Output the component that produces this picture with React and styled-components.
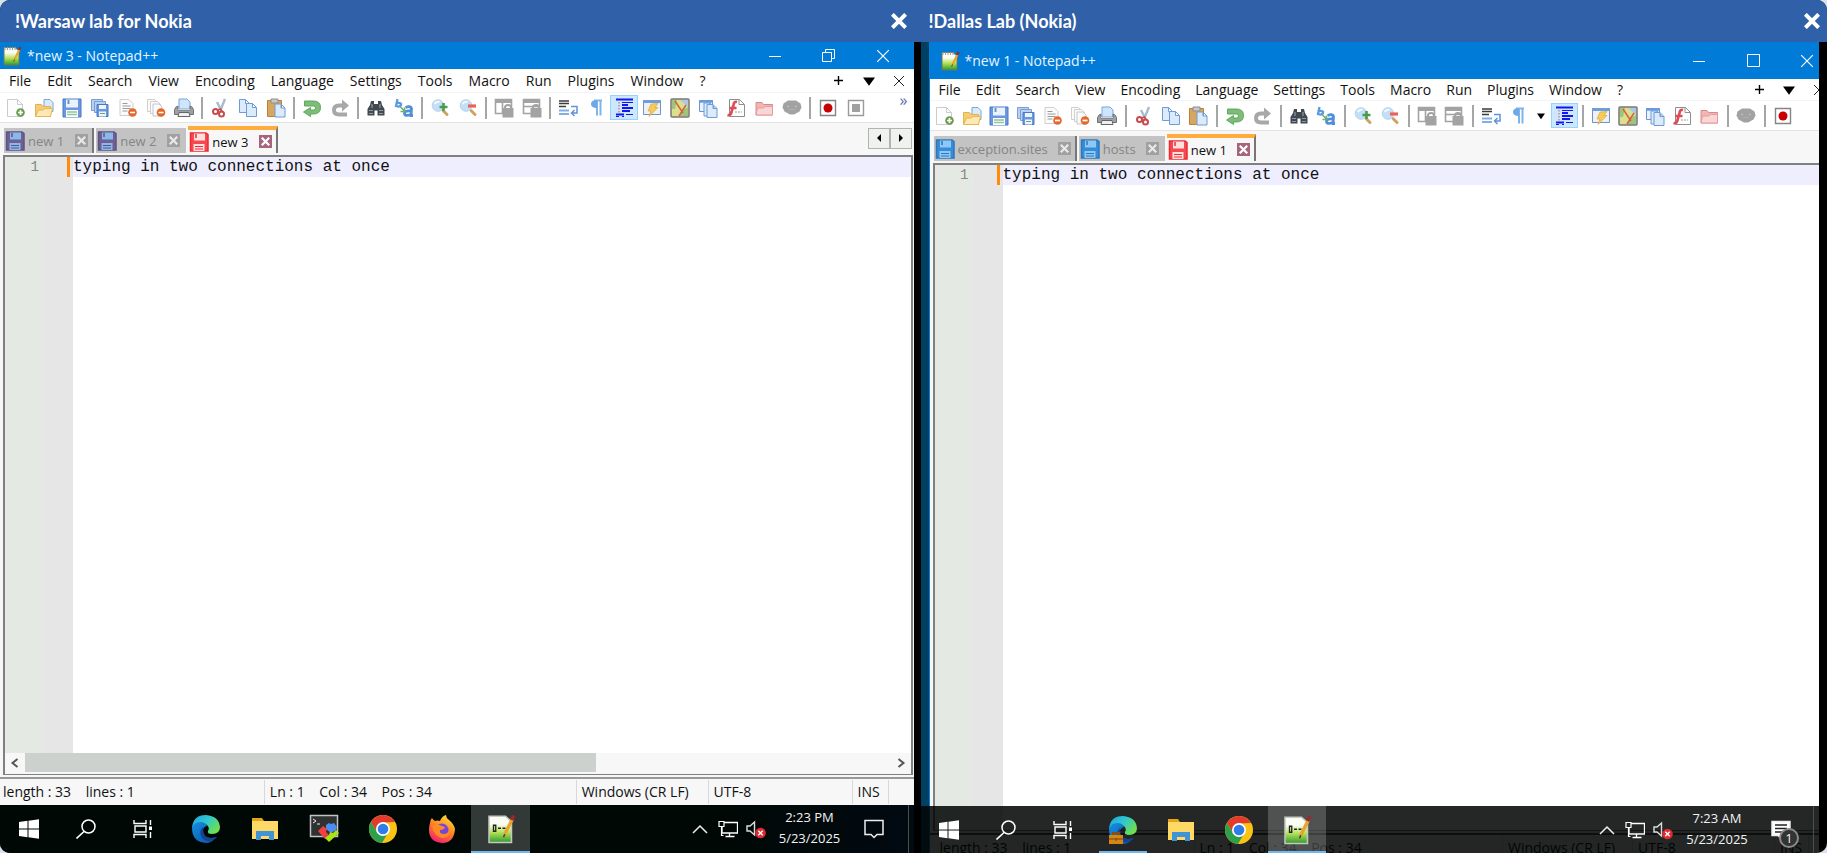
import React, { useState } from 'react';
import styled, { createGlobalStyle, css } from 'styled-components';

const UI_FONT = "'Open Sans', 'Noto Sans', sans-serif";

const GlobalStyle = createGlobalStyle`
	* {
		box-sizing: border-box;
	}
	body {
		margin: 0;
		background: #d9e2ec;
		font-family: ${UI_FONT};
		font-size: 13px;
	}
	button {
		border: none;
		padding: 0;
		background: none;
		font: inherit;
		color: inherit;
		cursor: pointer;
	}
	svg {
		display: block;
		flex: none;
	}
`;

const Screen = styled.main`
	display: grid;
	grid-template-columns: minmax(0, 1fr) calc(50% - 7px);
	height: 100vh;
	min-height: 480px;
	border-radius: 10px;
	overflow: hidden;
	background: #000;
`;

const Pane = styled.section`
	display: flex;
	flex-direction: column;
	min-width: 0;
	min-height: 0;
`;

const PaneHeader = styled.header`
	display: flex;
	align-items: center;
	justify-content: space-between;
	flex: none;
	height: 42px;
	padding-left: ${(p) => (p.$second ? '8px' : '15px')};
	padding-right: ${(p) => (p.$second ? '7px' : '14px')};
	background: #3060a8;
	color: #fff;
`;

const PaneTitle = styled.h1`
	margin: 0;
	font-family: Lato, sans-serif;
	font-size: 18px;
	line-height: 24px;
	font-weight: 700;
`;

const Desktop = styled.div`
	position: relative;
	display: flex;
	flex-direction: column;
	flex: 1;
	min-height: 0;
	overflow: hidden;
	margin-right: ${(p) => (p.$second ? '8px' : '7px')};
	padding-left: ${(p) => (p.$second ? '8px' : '0')};
	background: #004062;
`;

const AppWindow = styled.div`
	display: flex;
	flex-direction: column;
	flex: 1;
	min-height: 0;
	background: #f7f7f7;
	color: #111;
	${(p) =>
		p.$second &&
		css`
			margin-right: -15px;
			margin-bottom: -8px;
			border-left: 1px solid #0a7bd6;
		`}
`;

const TitleBar = styled.div`
	display: flex;
	align-items: center;
	flex: none;
	height: ${(p) => (p.$second ? '37px' : '27px')};
	padding-left: ${(p) => (p.$second ? '10px' : '2px')};
	padding-right: ${(p) => (p.$second ? '0' : '4px')};
	gap: 5px;
	background: #007bd8;
	color: #e8f4ff;
`;

const WindowTitle = styled.span`
	flex: 1;
	font-size: 14px;
	white-space: nowrap;
`;

const CaptionButtons = styled.div`
	display: flex;
	align-self: stretch;
`;

const CaptionButton = styled.button`
	display: grid;
	place-items: center;
	width: 54px;
`;

const MenuBar = styled.nav`
	display: flex;
	align-items: center;
	flex: none;
	height: ${(p) => (p.$second ? '22px' : '24px')};
	padding-left: 9px;
	gap: ${(p) => (p.$second ? '15px' : '16px')};
	background: #fff;
	border-bottom: 1px solid #f4f4f4;
	font-size: 14px;
	line-height: 20px;
	white-space: nowrap;
`;

const MenuExtras = styled.div`
	display: flex;
	margin-left: auto;
`;

const ExtraButton = styled.button`
	display: grid;
	place-items: center;
	width: 30px;
	height: 20px;
`;

const ToolBar = styled.div`
	display: flex;
	align-items: center;
	flex: none;
	height: 30px;
	padding: 0 4px 0 2px;
	background: #fff;
	border-bottom: 1px solid #e4e4e4;
`;

const ToolButton = styled.button`
	display: grid;
	place-items: center;
	flex: none;
	width: ${(p) => (p.$second ? '27px' : '28px')};
	height: 25px;
	${(p) =>
		p.$active &&
		css`
			background: #cce8ff;
			border: 1px solid #99d1ff;
		`}
`;

const CaretButton = styled(ToolButton)`
	width: 19px;
`;

const Separator = styled.span`
	flex: none;
	width: 2px;
	height: 22px;
	margin: 0 ${(p) => (p.$second ? '4px' : '3px')};
	background: #a6a6a6;
`;

const Overflow = styled.button`
	align-self: flex-start;
	margin-left: auto;
	margin-right: 2px;
	font-size: 16px;
	line-height: 14px;
	color: #5b6ba8;
`;

const TabStrip = styled.div`
	display: flex;
	align-items: flex-end;
	flex: none;
	height: 32px;
	gap: 2px;
	padding: 0 2px 2px 4px;
`;

const Tab = styled.div`
	display: flex;
	align-items: center;
	height: ${(p) => (p.$active ? '27px' : '25px')};
	padding: 0 4px 0 1px;
	gap: ${(p) => (p.$second ? '10px' : '11px')};
	background: ${(p) => (p.$active ? '#f7f7f7' : '#c3c3c3')};
	color: ${(p) => (p.$active ? '#111' : '#858585')};
	border-top: ${(p) => (p.$active ? '4px solid #ffab3d' : 'none')};
	border-right: 2px solid ${(p) => (p.$edge ? '#777' : '#c3c3c3')};
`;

const TabButton = styled.button`
	display: flex;
	align-items: center;
	gap: 3px;
	line-height: 20px;
`;

const TabClose = styled.button`
	display: grid;
	place-items: center;
	width: 13px;
	height: 13px;
	background: ${(p) => (p.$active ? '#a8647c' : '#a0a0a0')};
`;

const TabArrows = styled.div`
	display: flex;
	align-self: center;
	margin-left: auto;
`;

const ArrowButton = styled.button`
	display: grid;
	place-items: center;
	width: 22px;
	height: 21px;
	background: #f0f2f0;
	border: 1px solid #b0b3b0;
`;

const EditorFrame = styled.div`
	display: flex;
	flex-direction: column;
	flex: 1;
	min-height: 0;
	margin: ${(p) => (p.$second ? '0 0 2px 3px' : '0 1px 2px 3px')};
	border: 2px solid #808080;
	border-bottom-width: 1px;
`;

const EditorBody = styled.div`
	display: flex;
	flex: 1;
	min-height: 0;
	background: #fff;
`;

const LineNumbers = styled.div`
	flex: none;
	width: 38px;
	padding-right: 4px;
	background: #e4e9e4;
	color: #858585;
	font-family: 'Liberation Mono', monospace;
	font-size: 14px;
	line-height: 20px;
	text-align: right;
`;

const FoldMargin = styled.div`
	display: flex;
	justify-content: flex-end;
	flex: none;
	width: 30px;
	padding-right: 3px;
	background: #e6e6e6;
`;

const ChangeMark = styled.span`
	width: 3px;
	height: 20px;
	background: #ff8a0c;
`;

const Code = styled.textarea`
	flex: 1;
	min-width: 0;
	resize: none;
	border: none;
	outline: none;
	padding: 0;
	overflow: hidden;
	background: linear-gradient(#efeeff, #efeeff) 0 0 / 100% 20px no-repeat #fff;
	color: #111;
	font-family: 'Liberation Mono', monospace;
	font-size: 16px;
	line-height: 20px;
`;

const ScrollRow = styled.div`
	display: flex;
	flex: none;
	height: 21px;
	padding-bottom: 2px;
	background: #f7f7f7;
`;

const ScrollArrow = styled.button`
	display: grid;
	place-items: center;
	width: 20px;
	height: 19px;
`;

const ScrollTrack = styled.div`
	flex: 1;
	display: flex;
`;

const ScrollThumb = styled.div`
	width: 66%;
	background: #cdd1cd;
`;

const StatusBar = styled.footer`
	display: flex;
	align-items: center;
	flex: none;
	height: 28px;
	border-top: 2px solid ${(p) => (p.$second ? '#555' : '#999')};
	font-size: 14px;
	white-space: pre;
`;

const StatusCell = styled.span`
	flex: ${(p) => p.$flex};
	min-width: 0;
	padding-left: ${(p) => (p.$first ? (p.$second ? '10px' : '3px') : '5px')};
	border-right: 1px solid #d8d8d8;
	line-height: 24px;
`;

const StatusTail = styled.span`
	width: 25px;
`;

const TaskBar = styled.div`
	display: flex;
	align-items: stretch;
	flex: none;
	height: 48px;
	background: linear-gradient(90deg, #000806 80%, #020a12);
	color: #f2f2f2;
	${(p) =>
		p.$second &&
		css`
			position: absolute;
			left: 0;
			right: 0;
			bottom: 0;
			height: 47px;
			background: rgba(0, 4, 2, 0.86);
		`}
`;

const TaskButton = styled.button`
	display: grid;
	place-items: center;
	width: ${(p) => (p.$system ? '57px' : p.$second ? '58px' : '59px')};
	padding-top: 2px;
	border-bottom: 2px solid ${(p) => (p.$active ? '#6fb7ee' : 'transparent')};
	background: ${(p) => (p.$active ? 'rgba(255, 255, 255, 0.2)' : 'none')};
`;

const RunningMark = styled(TaskButton)`
	background: linear-gradient(#6fb7ee, #6fb7ee) center bottom / 48px 2px no-repeat;
	border-bottom: none;
	padding-bottom: 2px;
`;

const AppButtons = styled.div`
	display: flex;
	margin-left: ${(p) => (p.$second ? '2px' : '5px')};
`;

const Tray = styled.div`
	display: flex;
	align-items: center;
	margin-left: auto;
	margin-right: 5px;
	border-right: 1px solid #4a4f4d;
`;

const TrayButton = styled.button`
	display: grid;
	place-items: center;
	width: 28px;
	height: 40px;
`;

const Clock = styled.time`
	display: grid;
	justify-items: center;
	width: 80px;
	font-size: 13px;
	line-height: 21px;
	margin-top: -2px;
`;

const NoticeButton = styled.button`
	position: relative;
	display: grid;
	place-items: center;
	width: 48px;
	height: 40px;
	margin-right: ${(p) => (p.$second ? '8px' : '10px')};
`;

const NoticeCount = styled.span`
	position: absolute;
	right: 6px;
	bottom: 2px;
	width: 20px;
	height: 20px;
	border: 2px solid #8a8a8a;
	border-radius: 50%;
	background: #333;
	font-size: 13px;
	line-height: 16px;
	text-align: center;
`;

const Svg = ({ size = 20, box = 20, children }) => (
	<svg width={size} height={size} viewBox={`0 0 ${box} ${box}`} fill='none' aria-hidden='true'>
		{children}
	</svg>
);

const sheet = (x, y, fill = '#dcebfc', stroke = '#6f9bd6') => (
	<path
		d={`M${x} ${y}h6l4 4v9h-10z M${x + 6} ${y}v4h4`}
		fill={fill}
		stroke={stroke}
		strokeLinejoin='round'
	/>
);

const badge = (x, y, color, plus) => (
	<>
		<circle cx={x} cy={y} r='4.3' fill={color} />
		<path d={`M${x - 2.5} ${y}h5${plus ? `M${x} ${y - 2.5}v5` : ''}`} stroke='#fff' strokeWidth='1.7' />
	</>
);

const lens = (plus) => (
	<>
		<path d='M13 12.500l4 4' stroke='#cfa264' strokeWidth='3' strokeLinecap='round' />
		<circle cx='8' cy='7.500' r='5.800' fill='#c3dff5' stroke='#b4d2ea' />
		<path d='M4.500 6q2-3 5-2' stroke='#f2f9ff' strokeWidth='2' />
		{plus ? (
			<path d='M9.500 9h8M13.500 5v8' stroke='#4a9a50' strokeWidth='2.600' />
		) : (
			<path d='M10 8h8' stroke='#f0605a' strokeWidth='3.200' />
		)}
	</>
);

const lockedView = (vertical) => (
	<>
		<path d='M1.500 1.500h16v14h-16z' fill='#fff' stroke='#a3a3a3' strokeWidth='1.600' />
		<path d='M1 3h17' stroke='#a3a3a3' strokeWidth='4' />
		<path d={vertical ? 'M8.500 4v11' : 'M2 8.500h15'} stroke='#a3a3a3' strokeWidth='1.600' />
		<path d='M8.500 10h11v9.500h-11z' fill='#a3a3a3' />
		<path d='M11 11v-1.500q0-2.500 3-2.500t3 2.500v1.500' stroke='#a3a3a3' strokeWidth='2' />
	</>
);

const disk = (fill, stroke, label) => (
	<>
		<path d='M1.500 1h15.500l2 1.500v16.500h-17.500z' fill={fill} stroke={stroke} strokeWidth='1.500' />
		<path d='M5 1.500h11v7h-11z' fill={label} />
		<path d='M7 2v4' stroke={stroke} strokeWidth='1.500' />
		<path d='M4.500 12h11v7h-11z' fill={label} />
		<path d='M6 14.500h8M6 17h8' stroke={stroke} />
	</>
);

const toolIcons = {
	New: (
		<>
			<path d='M1.500 1.500h10l5 5v12h-15z' fill='#fdfdfd' stroke='#c9cdd0' />
			<path d='M11.500 1.500v5h5' stroke='#c9cdd0' />
			{badge(14.5, 14.5, '#6a9d50', true)}
		</>
	),
	Open: (
		<>
			<path d='M10 1.500h6l3 3v9h-9z' fill='#dcebfc' stroke='#7ba6da' />
			<path d='M1.500 6.500h6l2 2h7v10h-15z' fill='#f6cd77' stroke='#e6b04c' />
			<path d='M4.500 12h5l1.500-1.500h7.500l-2 8h-15z' fill='#fde9b5' stroke='#eab54e' />
		</>
	),
	Save: (
		<>
			<path d='M1 1h18v18h-18z' fill='#6a97de' stroke='#4a78c4' />
			<path d='M4 1.500h12v8h-12z' fill='#e9f2fd' />
			<path d='M6.500 2v4' stroke='#6c93c9' strokeWidth='2' />
			<path d='M4 12h12v7h-12z' fill='#fff' />
			<path d='M5 14h10M5 16.500h10' stroke='#8fc59a' strokeWidth='1.500' />
		</>
	),
	'Save All': (
		<>
			<path d='M1.500 1.500h11v11h-11z' fill='#b9d0f1' stroke='#7a9fd8' />
			<path d='M4.500 3.500h11v11h-11z' fill='#b9d0f1' stroke='#7a9fd8' />
			<path d='M7 6.500h11v12h-11z' fill='#6a97de' stroke='#4a78c4' />
			<path d='M9 7h7v4h-7zM9 13.500h7v5h-7z' fill='#eef5fd' />
			<path d='M10 15.500h5' stroke='#6aa57a' />
		</>
	),
	Close: (
		<>
			<path d='M2 1.500h9l4 4v12h-13z' fill='#fbfbfb' stroke='#cfcfcf' />
			<path d='M4.500 5.500h5M4.500 8h8M4.500 10.500h8M4.500 13h5' stroke='#9b9b9b' />
			{badge(14.5, 14.5, '#e4682b')}
		</>
	),
	'Close All': (
		<>
			<path d='M1.500 1.500h7l3 3v9h-10z' fill='#fbfbfb' stroke='#cfcfcf' />
			<path d='M4.500 3.500h7l3 3v9h-10z' fill='#fbfbfb' stroke='#cfcfcf' />
			<path d='M7 6h6l3 3v9h-9z' fill='#fbfbfb' stroke='#c6c6c6' />
			{badge(15, 14.5, '#e4682b')}
		</>
	),
	Print: (
		<>
			<path d='M5 1h8l3 3v7h-11z' fill='#cfe5fc' stroke='#77a6dc' />
			<path d='M2 9l2-1v4h12v-4l2 1 1.500 2.500v5h-19v-5z' fill='#9da1a4' stroke='#6f7274' />
			<path d='M4 11.500h12' stroke='#d4d4d4' />
			<path d='M5 14.500h10l1 4h-12z' fill='#eef0f2' stroke='#666' />
		</>
	),
	Cut: (
		<>
			<path d='M7 4l4 8M15 1l-4.500 11' stroke='#a9bccd' strokeWidth='2.400' />
			<circle cx='5.500' cy='13.500' r='2.500' stroke='#c94b4b' strokeWidth='2' />
			<circle cx='11.500' cy='16' r='2.500' stroke='#c94b4b' strokeWidth='2' />
			<path d='M7.500 12l3-1 1.500 2.500' stroke='#c94b4b' strokeWidth='1.800' />
		</>
	),
	Copy: (
		<>
			{sheet(1.5, 1.5)}
			{sheet(8.5, 5.5)}
		</>
	),
	Paste: (
		<>
			<path d='M1.500 2.500h14v16h-14z' fill='#d9a662' stroke='#b98038' />
			<path d='M5 1h7v4h-7z' fill='#c9c9c9' stroke='#8d8d8d' />
			{sheet(9, 6)}
		</>
	),
	Undo: (
		<path
			d='M2.500 3h9q7 0 7 6.500t-7 6.500h-3v2.500l-7-4.500 7-4.500v2.500h3q2 0 2-2t-2-2h-9z'
			fill='#7dbd78'
			stroke='#56a354'
			strokeWidth='.9'
		/>
	),
	Redo: (
		<path d='M17 18.500h-8q-7 0-7-6.500t7-6.500h3v-4l7 6-7 6v-4h-3q-3 0-3 2.500t3 2.500h8z' fill='#a8a8a8' />
	),
	Find: (
		<>
			<path d='M5 3h3v3h4v-3h3l1 4 2.500 4v6.500h-7v-5h-3v5h-7v-6.500l2.500-4z' fill='#414951' />
			<path d='M6 6v4M14 6v4M3 12.500h4M13 12.500h4M3 15.500h4M13 15.500h4' stroke='#8f9aa4' strokeWidth='1.200' />
		</>
	),
	Replace: (
		<>
			<path d='M3.500 1l-1.500 7q4 1.500 5-1t-4-2' stroke='#5a9be0' strokeWidth='2.300' />
			<path
				d='M11.500 9.500q5-2 6 1l-.5 7h2M17 13q-6-.500-6.500 2 0 4 6 1.500'
				stroke='#4f90d8'
				strokeWidth='2.800'
			/>
			<path d='M6.500 9l4 4M10.500 9.500v4h-4' stroke='#6cb06c' strokeWidth='1.600' />
		</>
	),
	'Zoom In': lens(true),
	'Zoom Out': lens(false),
	'Synchronize Vertical Scrolling': lockedView(true),
	'Synchronize Horizontal Scrolling': lockedView(false),
	'Word Wrap': (
		<>
			<path d='M1 3h10M1 5.500h10M1 8.500h7' stroke='#3b3b3b' strokeWidth='1.500' />
			<path d='M1 12.500h10M1 16h10' stroke='#7fb0ea' strokeWidth='2' />
			<path d='M13 8.500h6v6.500h-5M16.500 12l-3 3 3 3' stroke='#5f93d8' strokeWidth='1.500' />
		</>
	),
	'Show All Characters': (
		<>
			<path d='M8 2.500h8M11 3v14.500M14.500 3v14.500' stroke='#7fb6ea' strokeWidth='2' />
			<path d='M11 2q-6 0-6 4t6 4z' fill='#6ea8e6' />
		</>
	),
	'Show Indent Guide': (
		<>
			<path
				d='M2 1.500h17M8 7h6M8 10h11M8 13h8M2 16.500h8'
				stroke='#1616f0'
				strokeWidth='2'
			/>
			<path d='M8 4.500h11M2 18.500h3M8 18.500h2M12 16.500h7' stroke='#1616f0' />
			<path d='M5 4v11' stroke='#e24b5c' strokeDasharray='1.500 1.500' />
		</>
	),
	'User Defined Language': (
		<>
			<path d='M1.500 2.500h17v14h-17z' fill='#eef2f6' stroke='#6f93c6' />
			<path d='M1 3.500h18' stroke='#6f9edb' strokeWidth='3' />
			<path d='M9 6l7-.500-3 4h3l-9 9 2-5.500h-3z' fill='#f5cc5a' stroke='#dfa53c' strokeWidth='.7' />
		</>
	),
	'Document Map': (
		<>
			<rect x='1' y='1' width='18' height='18' rx='1' fill='#dcdf8e' stroke='#777' strokeWidth='1.500' />
			<path d='M2 2h5l-2 9h-3zM13 12l5-3v9h-9z' fill='#9dc580' />
			<path d='M10 2h8v7z' fill='#a9c9e6' />
			<path d='M5 3l8 12M16 7l-7 11' stroke='#d9603c' strokeWidth='1.500' />
		</>
	),
	'Document List': (
		<>
			<path d='M1.500 2.500h13v11h-13z' fill='#eaf3fd' stroke='#6c95cf' />
			<path d='M1 3.500h14' stroke='#6a9be0' strokeWidth='2.500' />
			{sheet(6, 5)}
			{sheet(9, 6.5)}
		</>
	),
	'Function List': (
		<>
			<path d='M3.500 1.500h10l5 5v12h-15z' fill='#fff' stroke='#8e8e8e' />
			<path d='M13 1.500v5h5' stroke='#8e8e8e' />
			<path d='M11 4q-3-1-3.500 3l-2 7q-.500 4-4 3M3.500 10h7' stroke='#df4b54' strokeWidth='2.700' />
			<path d='M9 14h7' stroke='#999' strokeDasharray='2 1' />
		</>
	),
	'Folder as Workspace': (
		<>
			<path d='M2 4.500h6l1.500 2h9v10.500h-16.500z' fill='#f3b4b4' stroke='#db8a8a' />
			<path d='M2 17l1.500-7h6l2-1.500h7v8.500z' fill='#f8d6d6' stroke='#e59b9b' />
		</>
	),
	Monitoring: (
		<>
			<path d='M6 2.500h8l4.500 3 1 4-2 4-5.500 3h-4l-5.500-3-2-4 1-4z' fill='#a2a2a2' />
			<circle cx='6' cy='8.500' r='.8' fill='#ccc' />
			<circle cx='14' cy='8.500' r='.8' fill='#ccc' />
			<path d='M7 11.500h6' stroke='#bbb' strokeWidth='.6' />
		</>
	),
	'Start Recording': (
		<>
			<path d='M2.500 2.500h15v15h-15z' fill='#fff' stroke='#858585' strokeWidth='1.400' />
			<circle cx='10' cy='10' r='4.500' fill='#c90000' />
		</>
	),
	'Stop Recording': (
		<>
			<path d='M2.500 2.500h15v15h-15z' fill='#fff' stroke='#9a9a9a' strokeWidth='1.400' />
			<path d='M6 6h8v8h-8z' fill='#a0a0a0' />
		</>
	),
};

const NotepadIcon = ({ size = 20, large }) => (
	<Svg size={size}>
		<defs>
			<linearGradient id='padGreen' x1='0' y1='0' x2='0' y2='1'>
				<stop offset='.3' stopColor='#fbfdf4' />
				<stop offset='.6' stopColor='#b9e45c' />
				<stop offset='1' stopColor='#2f9a2a' />
			</linearGradient>
		</defs>
		<path d='M2 1.500h11l4 3.500v14h-15z' fill='url(#padGreen)' stroke={large ? '#c4c8c2' : '#6a7a58'} />
		{large ? (
			<path d='M5 7v5M5 7.500h1.500v4h-1.500M8 9.500h2M11 9.500h2' stroke='#222' strokeWidth='.9' />
		) : (
			<path d='M3 1v3M5.500 1v3M8 1v3M10.500 1v3M13 1v3' stroke='#9a9a9a' />
		)}
		<path d='M17.500 3.500l-5 10' stroke='#e7a52c' strokeWidth='2.300' />
		<path d='M17 4l1.500-3' stroke='#9b2730' strokeWidth='2.400' />
		<path d='M12.500 13.500l-.8 2' stroke='#533' />
	</Svg>
);

const WindowsIcon = () => (
	<Svg>
		<path
			d='M0 3l8.500-1.200v7.700h-8.500zM9.500 1.700l10.500-1.500v9.300h-10.500zM0 10.500h8.500v7.700l-8.500-1.200zM9.500 10.500h10.500v9.300l-10.500-1.500z'
			fill='#fff'
		/>
	</Svg>
);

const SearchIcon = () => (
	<Svg>
		<circle cx='12.500' cy='7.500' r='6.500' stroke='#fff' strokeWidth='1.500' />
		<path d='M8 12.500l-7.500 7' stroke='#fff' strokeWidth='1.600' />
	</Svg>
);

const TaskViewIcon = () => (
	<Svg>
		<path
			d='M1 1v3.500h12v-3.500M1 19v-3.500h12v3.500M2 7h11v6h-11zM17.500 1v5M17.500 13v6'
			stroke='#fff'
			strokeWidth='1.400'
		/>
		<path d='M16 7.500h3v3.500h-3z' fill='#fff' />
	</Svg>
);

const EdgeIcon = ({ work }) => (
	<Svg size={30} box={30}>
		<defs>
			<linearGradient id='edgeTop' x1='0' y1='0' x2='1' y2='.6'>
				<stop offset='0' stopColor='#1ea1dd' />
				<stop offset='.5' stopColor='#2fc6d3' />
				<stop offset='1' stopColor='#6ee04d' />
			</linearGradient>
			<linearGradient id='edgeLow' x1='0' y1='0' x2='1' y2='1'>
				<stop offset='0' stopColor='#1590e4' />
				<stop offset='1' stopColor='#0b4fa3' />
			</linearGradient>
		</defs>
		<path d='M1 14Q2 1 15 1q13 1 14 12 0 7-8 7-5 0-4-3 2-3-1-6-7-5-15 3z' fill='url(#edgeTop)' />
		<path d='M1 14q2-6 8-6 6 0 7 4-5 1-4 7 3 7 13 4-4 6-10 6Q1 28 1 14z' fill='url(#edgeLow)' />
		<path d='M12 13q-5 5-1 11 5 5 11 2 4-2 4-3-10 3-13-3-1-4-1-7z' fill='#15438f' />
		{work && (
			<>
				<path d='M1 20h14v9h-14z' fill='#d78616' />
				<path d='M5 20v-2h6v2' stroke='#8c4d0d' strokeWidth='2' />
				<path d='M1 24h14M8 23v3' stroke='#7a430d' />
			</>
		)}
	</Svg>
);

const ExplorerIcon = () => (
	<Svg size={28} box={28}>
		<path d='M1 3h10l2 3h14v18h-26z' fill='#e5a514' />
		<path d='M1 6h26v18h-26z' fill='#ffd966' />
		<path d='M5 25v-9h18v9h-5v-4h-8v4z' fill='#3f93d6' />
	</Svg>
);

const TerminalIcon = () => (
	<Svg size={30} box={30}>
		<path d='M1.500 1.500h27v21h-27z' fill='#2f3231' stroke='#c0c4c6' strokeWidth='1.500' />
		<path d='M4 5l3 2-3 2M8 10h3' stroke='#eee' />
		<path d='M17 11l3-2 2 1 3-1 3 4-1 3-5 3-5-4z' fill='#4b8df0' />
		<path d='M9 17l5-5 4 3-1 3 4 4-5 3z' fill='#ee4140' />
		<path d='M16 24l4-3 1-3 3 1 3-3 3 3-10 9z' fill='#a8e316' />
	</Svg>
);

const ChromeIcon = () => (
	<Svg size={30} box={30}>
		<circle cx='15' cy='15' r='14' fill='#fbc414' />
		<path d='M2.900 8A14 14 0 0 1 27.100 8L15 8.500 9 18z' fill='#e23b2e' />
		<path d='M2.900 8A14 14 0 0 0 14 29l6.500-11-11.500 0z' fill='#2da04b' />
		<circle cx='15' cy='15' r='7' fill='#fff' />
		<circle cx='15' cy='15' r='5.300' fill='#2f7de9' />
	</Svg>
);

const FirefoxIcon = () => (
	<Svg size={30} box={30}>
		<defs>
			<linearGradient id='foxFire' x1='.8' y1='0' x2='.3' y2='1'>
				<stop offset='0' stopColor='#ffe33c' />
				<stop offset='.5' stopColor='#ff8321' />
				<stop offset='1' stopColor='#f31d71' />
			</linearGradient>
		</defs>
		<path
			d='M3 9q0-3 2-5 1 2 3 3 3-1 5 0 2-5 6-6 0 3 3 5 5 4 6 9-1 14-13 14Q2 28 2 16q0-4 1-7z'
			fill='url(#foxFire)'
		/>
		<circle cx='15' cy='16' r='6.500' fill='#7846d4' />
		<path d='M5 12q5-3 10 0l3 1q-1 3-5 3-1 4 4 4 4 0 6-5 1 8-7 9-9-1-11-12z' fill='#ff8a24' />
	</Svg>
);

const ChevronIcon = () => (
	<Svg size={16} box={16}>
		<path d='M1 12l7-7 7 7' stroke='#eee' strokeWidth='1.500' />
	</Svg>
);

const NetworkIcon = () => (
	<Svg>
		<path
			d='M6 3.500h13.500v10.500h-15.500v-6M11.500 14v3M7.500 17.500h9'
			stroke='#fff'
			strokeWidth='1.300'
		/>
		<path d='M1 2.500h5v5h-5zM3.500 7.500v9h2' stroke='#fff' strokeWidth='1.200' />
	</Svg>
);

const SpeakerIcon = () => (
	<Svg>
		<path d='M1 7h3l4.500-4v13l-4.500-4h-3z' stroke='#ddd' strokeWidth='1.400' />
		<circle cx='14.500' cy='14' r='5.300' fill='#e02a33' />
		<path d='M12.300 11.800l4.400 4.400M16.700 11.800l-4.400 4.400' stroke='#fff' strokeWidth='1.400' />
	</Svg>
);

const NoticeIcon = ({ filled }) => (
	<Svg>
		<path
			d='M1 1.500h18v14h-6l-3 3-3-3h-6z'
			fill={filled ? '#fff' : 'none'}
			stroke='#eee'
			strokeWidth='1.500'
		/>
		{filled && <path d='M4 5h12M4 8.500h12M4 12h8' stroke='#222' strokeWidth='1.400' />}
	</Svg>
);

const Cross = ({ size, width, color }) => (
	<Svg size={size} box={12}>
		<path d='M1 1l10 10M11 1l-10 10' stroke={color} strokeWidth={width} />
	</Svg>
);

const Triangle = ({ dir, size = 8 }) => {
	const paths = {
		down: 'M0 2h10l-5 7z',
		left: 'M7.500 0v10l-5-5z',
		right: 'M2.500 0v10l5-5z',
	};
	return (
		<Svg size={size} box={10}>
			<path d={paths[dir]} fill='#000' />
		</Svg>
	);
};

const menus = [
	'File',
	'Edit',
	'Search',
	'View',
	'Encoding',
	'Language',
	'Settings',
	'Tools',
	'Macro',
	'Run',
	'Plugins',
	'Window',
	'?',
];

const commonTools = [
	'New', 'Open', 'Save', 'Save All', 'Close', 'Close All', 'Print', '|',
	'Cut', 'Copy', 'Paste', '|',
	'Undo', 'Redo', '|',
	'Find', 'Replace', '|',
	'Zoom In', 'Zoom Out', '|',
	'Synchronize Vertical Scrolling', 'Synchronize Horizontal Scrolling', '|',
	'Word Wrap', 'Show All Characters',
];

const panelTools = [
	'User Defined Language', 'Document Map', 'Document List', 'Function List', 'Folder as Workspace',
];

const sessions = [
	{
		name: '!Warsaw lab for Nokia',
		title: '*new 3 - Notepad++',
		tabs: ['new 1', 'new 2', 'new 3'],
		tools: [...commonTools, 'Show Indent Guide', ...panelTools, 'Monitoring', '|', 'Start Recording', 'Stop Recording'],
		apps: ['edge', 'explorer', 'terminal', 'chrome', 'firefox', 'notepad'],
		time: '2:23 PM',
		statusFlex: ['0 1 265px', '1 1 312px', '0 1 132px', '0 1 144px', '0 0 36px'],
	},
	{
		second: true,
		name: '!Dallas Lab (Nokia)',
		title: '*new 1 - Notepad++',
		tabs: ['exception.sites', 'hosts', 'new 1'],
		tools: [...commonTools, 'v', 'Show Indent Guide', '|', ...panelTools, '|', 'Monitoring', '|', 'Start Recording'],
		apps: ['edge', 'explorer', 'chrome', 'notepad'],
		time: '7:23 AM',
		notices: 1,
		statusFlex: ['0 1 265px', '1 1 308px', '0 1 130px', '0 1 142px', '0 0 34px'],
	},
];

const appIcons = {
	explorer: <ExplorerIcon />,
	terminal: <TerminalIcon />,
	chrome: <ChromeIcon />,
	firefox: <FirefoxIcon />,
	notepad: <NotepadIcon size={30} large />,
};

const Tools = ({ tools, second }) => (
	<ToolBar>
		{tools.map((tool, i) => {
			if (tool === '|') return <Separator key={i} $second={second} />;
			if (tool === 'v') {
				return (
					<CaretButton key={i} aria-label='More characters'>
						<Triangle dir='down' size={8} />
					</CaretButton>
				);
			}
			return (
				<ToolButton key={i} aria-label={tool} $second={second} $active={tool === 'Show Indent Guide'}>
					<Svg>{toolIcons[tool]}</Svg>
				</ToolButton>
			);
		})}
		{!second && <Overflow aria-label='More tools'>»</Overflow>}
	</ToolBar>
);

const Tabs = ({ tabs, second }) => (
	<TabStrip>
		{tabs.map((tab, i) => {
			const active = i === tabs.length - 1;
			const idle = second ? ['#378cd8', '#2b78be', '#8fc8f5'] : ['#6f5f92', '#5c5386', '#8ab8ea'];
			return (
				<Tab key={tab} $active={active} $edge={i !== 1} $second={second}>
					<TabButton>
						<Svg>{active ? disk('#f5494f', '#ec2b33', '#ffe0e0') : disk(...idle)}</Svg>
						{tab}
					</TabButton>
					<TabClose $active={active} aria-label={`Close ${tab}`}>
						<Cross size={9} width={3} color={active ? '#fff' : '#e8e8e8'} />
					</TabClose>
				</Tab>
			);
		})}
		{!second && (
			<TabArrows>
				<ArrowButton aria-label='Previous tabs'>
					<Triangle dir='left' />
				</ArrowButton>
				<ArrowButton aria-label='Next tabs'>
					<Triangle dir='right' />
				</ArrowButton>
			</TabArrows>
		)}
	</TabStrip>
);

const Editor = ({ second }) => {
	const [text, setText] = useState('typing in two connections at once');

	return (
		<EditorFrame $second={second}>
			<EditorBody>
				<LineNumbers>1</LineNumbers>
				<FoldMargin>
					<ChangeMark />
				</FoldMargin>
				<Code
					aria-label='Document text'
					spellCheck={false}
					value={text}
					onChange={(e) => setText(e.target.value)}
				/>
			</EditorBody>
			{!second && (
				<ScrollRow>
					<ScrollArrow aria-label='Scroll left'>
						<Svg size={10} box={10}>
							<path d='M7.500 1l-5 4 5 4' stroke='#555' strokeWidth='2' />
						</Svg>
					</ScrollArrow>
					<ScrollTrack>
						<ScrollThumb />
					</ScrollTrack>
					<ScrollArrow aria-label='Scroll right'>
						<Svg size={10} box={10}>
							<path d='M2.500 1l5 4-5 4' stroke='#555' strokeWidth='2' />
						</Svg>
					</ScrollArrow>
				</ScrollRow>
			)}
		</EditorFrame>
	);
};

const Status = ({ second, flex }) => {
	const cells = [
		'length : 33    lines : 1',
		'Ln : 1    Col : 34    Pos : 34',
		'Windows (CR LF)',
		'UTF-8',
		'INS',
	];
	return (
		<StatusBar $second={second}>
			{cells.map((cell, i) => (
				<StatusCell key={cell} $flex={flex[i]} $first={i === 0} $second={second}>
					{cell}
				</StatusCell>
			))}
			<StatusTail />
		</StatusBar>
	);
};

const Tasks = ({ session }) => {
	const { second, apps, time, notices } = session;
	return (
		<TaskBar $second={second}>
			<TaskButton $system aria-label='Start'>
				<WindowsIcon />
			</TaskButton>
			<TaskButton $system aria-label='Search'>
				<SearchIcon />
			</TaskButton>
			<TaskButton $system aria-label='Task View'>
				<TaskViewIcon />
			</TaskButton>
			<AppButtons $second={second}>
				{apps.map((app) => {
					if (app === 'edge') {
						const Button = second ? RunningMark : TaskButton;
						return (
							<Button key={app} $second={second} aria-label={app}>
								<EdgeIcon work={second} />
							</Button>
						);
					}
					return (
						<TaskButton key={app} $second={second} aria-label={app} $active={app === 'notepad'}>
							{appIcons[app]}
						</TaskButton>
					);
				})}
			</AppButtons>
			<Tray>
				<TrayButton aria-label='Show hidden icons'>
					<ChevronIcon />
				</TrayButton>
				<TrayButton aria-label='Network'>
					<NetworkIcon />
				</TrayButton>
				<TrayButton aria-label='Volume muted'>
					<SpeakerIcon />
				</TrayButton>
				<Clock>
					<span>{time}</span>
					<span>5/23/2025</span>
				</Clock>
				<NoticeButton $second={second} aria-label='Notifications'>
					<NoticeIcon filled={second} />
					{notices && <NoticeCount>{notices}</NoticeCount>}
				</NoticeButton>
			</Tray>
		</TaskBar>
	);
};

const Session = ({ session }) => {
	const { second, name, title, tabs, tools, statusFlex } = session;
	return (
		<Pane>
			<PaneHeader $second={second}>
				<PaneTitle>{name}</PaneTitle>
				<button aria-label={`Disconnect ${name}`}>
					<Cross size={16} width={3} color='#fff' />
				</button>
			</PaneHeader>
			<Desktop $second={second}>
				<AppWindow $second={second}>
					<TitleBar $second={second}>
						<NotepadIcon />
						<WindowTitle>{title}</WindowTitle>
						<CaptionButtons>
							<CaptionButton aria-label='Minimize'>
								<Svg size={12} box={12}>
									<path d='M0 6.500h12' stroke='#fff' />
								</Svg>
							</CaptionButton>
							<CaptionButton aria-label='Maximize'>
								<Svg size={13} box={13}>
									{second ? (
										<path d='M.5.500h12v12h-12z' stroke='#fff' />
									) : (
										<path d='M.5 3.500h9v9h-9zM3.500 3.500v-3h9v9h-3' stroke='#fff' />
									)}
								</Svg>
							</CaptionButton>
							<CaptionButton aria-label='Close window'>
								<Cross size={14} width={1} color='#fff' />
							</CaptionButton>
						</CaptionButtons>
					</TitleBar>
					<MenuBar $second={second}>
						{menus.map((menu) => (
							<button key={menu}>{menu}</button>
						))}
						<MenuExtras>
							<ExtraButton aria-label='New tab'>
								<Svg size={9} box={9}>
									<path d='M0 4.500h9M4.500 0v9' stroke='#000' strokeWidth='1.400' />
								</Svg>
							</ExtraButton>
							<ExtraButton aria-label='Tab list'>
								<Triangle dir='down' size={12} />
							</ExtraButton>
							<ExtraButton aria-label='Close tab'>
								<Cross size={12} width={1} color='#222' />
							</ExtraButton>
						</MenuExtras>
					</MenuBar>
					<Tools tools={tools} second={second} />
					<Tabs tabs={tabs} second={second} />
					<Editor second={second} />
					<Status second={second} flex={statusFlex} />
				</AppWindow>
				<Tasks session={session} />
			</Desktop>
		</Pane>
	);
};

const App = () => (
	<>
		<GlobalStyle />
		<Screen>
			{sessions.map((session) => (
				<Session key={session.name} session={session} />
			))}
		</Screen>
	</>
);

export default App;
